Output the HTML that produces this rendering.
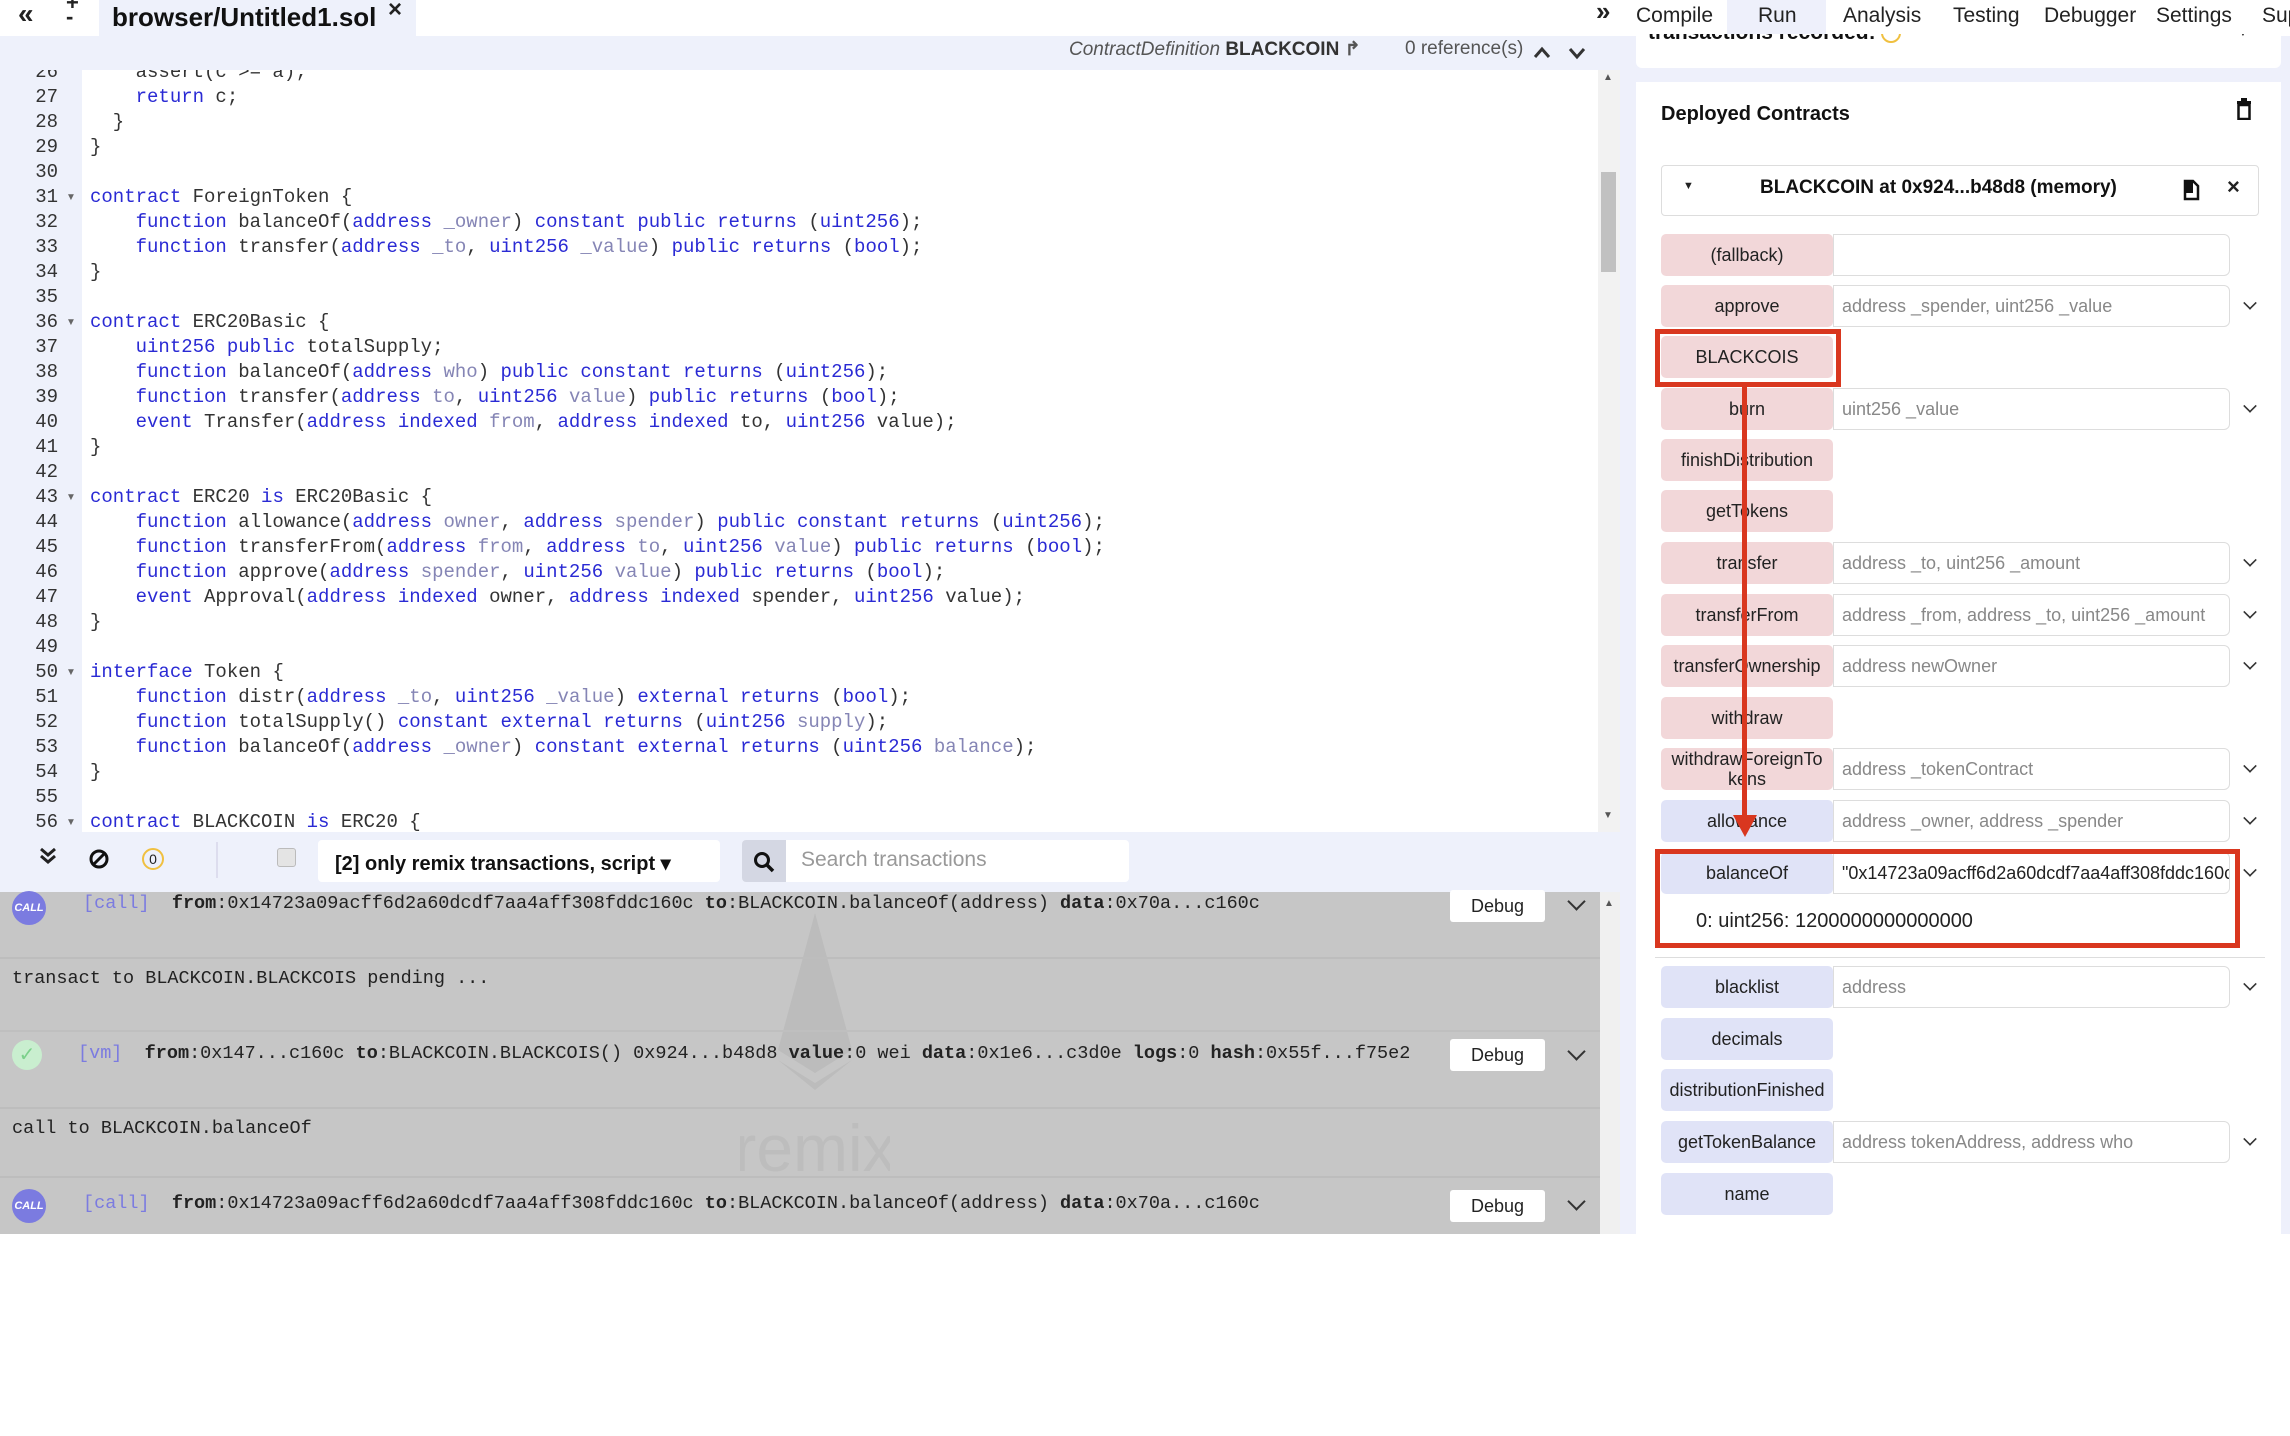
<!DOCTYPE html>
<html><head><meta charset="utf-8"><style>
*{margin:0;padding:0;box-sizing:border-box}
body{width:2290px;height:1436px;background:#fff;position:relative;overflow:hidden;font-family:"Liberation Sans",sans-serif;color:#222}
.a{position:absolute;white-space:pre}
.code{font-family:"Liberation Mono",monospace;font-size:19px;color:#333}
.k{color:#2a2ad4}.p{color:#8585b5}
.ln{position:absolute;left:0;width:58px;text-align:right;font-family:"Liberation Mono",monospace;font-size:19px;color:#333}
.fold{position:absolute;left:66px;font-size:10px;color:#666}
.row{position:absolute;left:1661px;height:42px}
.btn{position:absolute;left:0;top:0;width:172px;height:42px;border-radius:5px;font-size:18px;text-align:center;line-height:42px;color:#222}
.pk{background:#f2d7d9}.bl{background:#e0e3f7}
.inp{position:absolute;left:172px;top:0;width:397px;height:42px;background:#fff;border:1px solid #ddd;border-radius:0 6px 6px 0;font-size:18px;color:#888;line-height:40px;padding-left:8px;white-space:nowrap;overflow:hidden}
.chev{position:absolute;left:583px;top:12px;width:12px;height:12px;border-right:2px solid #333;border-bottom:2px solid #333;transform:rotate(45deg) scale(.8)}
.log{font-family:"Liberation Mono",monospace;font-size:18.5px;color:#222}
.dbg{position:absolute;left:1450px;width:95px;height:32px;background:#fff;border-radius:3px;font-size:18px;text-align:center;line-height:32px;color:#222}
.tch{position:absolute;left:1570px;width:13px;height:13px;border-right:2px solid #333;border-bottom:2px solid #333;transform:rotate(45deg)}
.sep{position:absolute;left:0;width:1600px;height:2px;background:#bdbdbd}
</style></head><body>

<!-- top tab bar -->
<div class="a" style="left:18px;top:-2px;font-size:28px;font-weight:bold">«</div>
<div class="a" style="left:66px;top:-4px;font-size:22px;font-weight:bold;line-height:14px">+<br>-</div>
<div class="a" style="left:99px;top:0;width:317px;height:36px;background:#eef1fb"></div>
<div class="a" style="left:112px;top:2px;font-size:26px;font-weight:bold;color:#111">browser/Untitled1.sol</div>
<div class="a" style="left:388px;top:-4px;font-size:24px;font-weight:bold">×</div>

<!-- editor header -->
<div class="a" style="left:0;top:36px;width:1620px;height:34px;background:#eef1fb"></div>
<div class="a" style="left:1069px;top:38px;font-size:19px;color:#555"><i>ContractDefinition</i> <b style="color:#333">BLACKCOIN</b> <span style="font-weight:bold">↱</span></div>
<div class="a" style="left:1405px;top:38px;font-size:19px;color:#555">0 reference(s)</div>
<svg class="a" style="left:1532px;top:42px" width="60" height="20"><path d="M3 15 L10 7 L17 15 M38 7 L45 15 L52 7" stroke="#333" stroke-width="3" fill="none"/></svg>

<!-- editor gutter -->
<div class="a" style="left:0;top:70px;width:82px;height:762px;background:#eef1fb"></div>
<div class="a" style="left:1598px;top:70px;width:22px;height:762px;background:#f2f2f2"></div>
<div class="a" style="left:1601px;top:172px;width:15px;height:100px;background:#c1c1c1"></div>
<div class="a" style="left:1603px;top:72px;font-size:10px;color:#555">▲</div>
<div class="a" style="left:1603px;top:810px;font-size:10px;color:#555">▼</div>

<div style="position:absolute;left:0;top:70px;width:1596px;height:762px;overflow:hidden"><div style="position:absolute;left:0;top:-70px;width:1596px;height:900px">
<div class="ln" style="top:61px">26</div><div class="a code" style="left:90px;top:61px">    assert(c &gt;= a);</div>
<div class="ln" style="top:86px">27</div><div class="a code" style="left:90px;top:86px">    <span class="k">return</span> c;</div>
<div class="ln" style="top:111px">28</div><div class="a code" style="left:90px;top:111px">  }</div>
<div class="ln" style="top:136px">29</div><div class="a code" style="left:90px;top:136px">}</div>
<div class="ln" style="top:161px">30</div>
<div class="ln" style="top:186px">31</div><div class="fold" style="top:192px">▼</div><div class="a code" style="left:90px;top:186px"><span class="k">contract</span> ForeignToken {</div>
<div class="ln" style="top:211px">32</div><div class="a code" style="left:90px;top:211px">    <span class="k">function</span> balanceOf(<span class="k">address</span> <span class="p">_owner</span>) <span class="k">constant public returns</span> (<span class="k">uint256</span>);</div>
<div class="ln" style="top:236px">33</div><div class="a code" style="left:90px;top:236px">    <span class="k">function</span> transfer(<span class="k">address</span> <span class="p">_to</span>, <span class="k">uint256</span> <span class="p">_value</span>) <span class="k">public returns</span> (<span class="k">bool</span>);</div>
<div class="ln" style="top:261px">34</div><div class="a code" style="left:90px;top:261px">}</div>
<div class="ln" style="top:286px">35</div>
<div class="ln" style="top:311px">36</div><div class="fold" style="top:317px">▼</div><div class="a code" style="left:90px;top:311px"><span class="k">contract</span> ERC20Basic {</div>
<div class="ln" style="top:336px">37</div><div class="a code" style="left:90px;top:336px">    <span class="k">uint256 public</span> totalSupply;</div>
<div class="ln" style="top:361px">38</div><div class="a code" style="left:90px;top:361px">    <span class="k">function</span> balanceOf(<span class="k">address</span> <span class="p">who</span>) <span class="k">public constant returns</span> (<span class="k">uint256</span>);</div>
<div class="ln" style="top:386px">39</div><div class="a code" style="left:90px;top:386px">    <span class="k">function</span> transfer(<span class="k">address</span> <span class="p">to</span>, <span class="k">uint256</span> <span class="p">value</span>) <span class="k">public returns</span> (<span class="k">bool</span>);</div>
<div class="ln" style="top:411px">40</div><div class="a code" style="left:90px;top:411px">    <span class="k">event</span> Transfer(<span class="k">address indexed</span> <span class="p">from</span>, <span class="k">address indexed</span> to, <span class="k">uint256</span> value);</div>
<div class="ln" style="top:436px">41</div><div class="a code" style="left:90px;top:436px">}</div>
<div class="ln" style="top:461px">42</div>
<div class="ln" style="top:486px">43</div><div class="fold" style="top:492px">▼</div><div class="a code" style="left:90px;top:486px"><span class="k">contract</span> ERC20 <span class="k">is</span> ERC20Basic {</div>
<div class="ln" style="top:511px">44</div><div class="a code" style="left:90px;top:511px">    <span class="k">function</span> allowance(<span class="k">address</span> <span class="p">owner</span>, <span class="k">address</span> <span class="p">spender</span>) <span class="k">public constant returns</span> (<span class="k">uint256</span>);</div>
<div class="ln" style="top:536px">45</div><div class="a code" style="left:90px;top:536px">    <span class="k">function</span> transferFrom(<span class="k">address</span> <span class="p">from</span>, <span class="k">address</span> <span class="p">to</span>, <span class="k">uint256</span> <span class="p">value</span>) <span class="k">public returns</span> (<span class="k">bool</span>);</div>
<div class="ln" style="top:561px">46</div><div class="a code" style="left:90px;top:561px">    <span class="k">function</span> approve(<span class="k">address</span> <span class="p">spender</span>, <span class="k">uint256</span> <span class="p">value</span>) <span class="k">public returns</span> (<span class="k">bool</span>);</div>
<div class="ln" style="top:586px">47</div><div class="a code" style="left:90px;top:586px">    <span class="k">event</span> Approval(<span class="k">address indexed</span> owner, <span class="k">address indexed</span> spender, <span class="k">uint256</span> value);</div>
<div class="ln" style="top:611px">48</div><div class="a code" style="left:90px;top:611px">}</div>
<div class="ln" style="top:636px">49</div>
<div class="ln" style="top:661px">50</div><div class="fold" style="top:667px">▼</div><div class="a code" style="left:90px;top:661px"><span class="k">interface</span> Token {</div>
<div class="ln" style="top:686px">51</div><div class="a code" style="left:90px;top:686px">    <span class="k">function</span> distr(<span class="k">address</span> <span class="p">_to</span>, <span class="k">uint256</span> <span class="p">_value</span>) <span class="k">external returns</span> (<span class="k">bool</span>);</div>
<div class="ln" style="top:711px">52</div><div class="a code" style="left:90px;top:711px">    <span class="k">function</span> totalSupply() <span class="k">constant external returns</span> (<span class="k">uint256</span> <span class="p">supply</span>);</div>
<div class="ln" style="top:736px">53</div><div class="a code" style="left:90px;top:736px">    <span class="k">function</span> balanceOf(<span class="k">address</span> <span class="p">_owner</span>) <span class="k">constant external returns</span> (<span class="k">uint256</span> <span class="p">balance</span>);</div>
<div class="ln" style="top:761px">54</div><div class="a code" style="left:90px;top:761px">}</div>
<div class="ln" style="top:786px">55</div>
<div class="ln" style="top:811px">56</div><div class="fold" style="top:817px">▼</div><div class="a code" style="left:90px;top:811px"><span class="k">contract</span> BLACKCOIN <span class="k">is</span> ERC20 {</div>
</div></div>
<div class="a" style="left:0;top:70px;width:82px;height:0"></div>

<!-- terminal toolbar -->
<div class="a" style="left:0;top:832px;width:1620px;height:60px;background:#eef1fb"></div>
<svg class="a" style="left:38px;top:846px" width="20" height="20"><path d="M3 3 L10 9 L17 3 M3 10 L10 16 L17 10" stroke="#222" stroke-width="3" fill="none"/></svg>
<svg class="a" style="left:88px;top:848px" width="22" height="22"><circle cx="11" cy="11" r="8" stroke="#111" stroke-width="3" fill="none"/><path d="M5 17 L17 5" stroke="#111" stroke-width="3"/></svg>
<div class="a" style="left:142px;top:848px;width:22px;height:22px;border:2px solid #f0c040;border-radius:50%;font-size:14px;text-align:center;line-height:18px">0</div>
<div class="a" style="left:216px;top:842px;width:2px;height:36px;background:#dde"></div>
<div class="a" style="left:277px;top:848px;width:19px;height:19px;border:1px solid #bbb;border-radius:3px;background:#e4e4e4"></div>
<div class="a" style="left:318px;top:840px;width:402px;height:42px;background:#fff;border-radius:4px"></div>
<div class="a" style="left:335px;top:851px;font-size:20px;font-weight:bold;color:#111">[2] only remix transactions, script ▾</div>
<div class="a" style="left:742px;top:840px;width:387px;height:42px;background:#fff;border-radius:4px"></div>
<div class="a" style="left:742px;top:840px;width:44px;height:42px;background:#d4d7e3;border-radius:4px 0 0 4px"></div>
<svg class="a" style="left:752px;top:850px" width="24" height="24"><circle cx="10" cy="10" r="6.5" stroke="#111" stroke-width="3" fill="none"/><path d="M15 15 L21 21" stroke="#111" stroke-width="3.5"/></svg>
<div class="a" style="left:801px;top:848px;font-size:21px;color:#999">Search transactions</div>

<!-- terminal log -->
<div class="a" style="left:0;top:892px;width:1600px;height:342px;background:#c6c6c6"></div>
<div class="a" style="left:1600px;top:892px;width:20px;height:342px;background:#f0f0f0"></div>
<div class="a" style="left:1604px;top:898px;font-size:10px;color:#555">▲</div>
<svg class="a" style="left:740px;top:905px" width="150" height="280"><g fill="#bcbcbc"><path d="M75 8 L38 145 L75 168 L112 145 Z"/><path d="M75 178 L38 155 L75 185 L112 155 Z"/></g><text x="75" y="266" font-family="Liberation Sans" font-size="66" fill="#bdbdbd" text-anchor="middle">remix</text></svg>

<div class="sep" style="top:957px"></div>
<div class="sep" style="top:1107px"></div>
<div class="sep" style="top:1176px"></div>
<div class="sep" style="top:1030px;background:#bfbfbf"></div>

<div class="a" style="left:12px;top:891px;width:34px;height:34px;border-radius:50%;background:#7b7be0;color:#fff;font-size:11px;font-weight:bold;font-style:italic;text-align:center;line-height:34px">CALL</div>
<div class="a log" style="left:83px;top:893px"><span style="color:#7b7be0">[call]</span>  <b>from</b>:0x14723a09acff6d2a60dcdf7aa4aff308fddc160c <b>to</b>:BLACKCOIN.balanceOf(address) <b>data</b>:0x70a...c160c</div>
<div class="dbg" style="top:890px">Debug</div><div class="tch" style="top:895px"></div>

<div class="a log" style="left:12px;top:968px">transact to BLACKCOIN.BLACKCOIS pending ...</div>

<div class="a" style="left:12px;top:1040px;width:30px;height:30px;border-radius:50%;background:#c9eecf;color:#7bd08a;font-size:20px;text-align:center;line-height:30px">✓</div>
<div class="a log" style="left:78px;top:1043px"><span style="color:#7b7be0">[vm]</span>  <b>from</b>:0x147...c160c <b>to</b>:BLACKCOIN.BLACKCOIS() 0x924...b48d8 <b>value</b>:0 wei <b>data</b>:0x1e6...c3d0e <b>logs</b>:0 <b>hash</b>:0x55f...f75e2</div>
<div class="dbg" style="top:1039px">Debug</div><div class="tch" style="top:1045px"></div>

<div class="a log" style="left:12px;top:1118px">call to BLACKCOIN.balanceOf</div>

<div class="a" style="left:12px;top:1189px;width:34px;height:34px;border-radius:50%;background:#7b7be0;color:#fff;font-size:11px;font-weight:bold;font-style:italic;text-align:center;line-height:34px">CALL</div>
<div class="a log" style="left:83px;top:1193px"><span style="color:#7b7be0">[call]</span>  <b>from</b>:0x14723a09acff6d2a60dcdf7aa4aff308fddc160c <b>to</b>:BLACKCOIN.balanceOf(address) <b>data</b>:0x70a...c160c</div>
<div class="dbg" style="top:1190px">Debug</div><div class="tch" style="top:1195px"></div>

<!-- right panel -->
<div class="a" style="left:1620px;top:36px;width:670px;height:1198px;background:#eef0fb"></div>
<div class="a" style="left:1636px;top:20px;width:645px;height:48px;background:#fff;border-radius:0 0 6px 6px;overflow:hidden"><div class="a" style="left:12px;top:1px;font-size:21px;font-weight:bold;color:#111">transactions recorded: <span style="display:inline-block;width:20px;height:20px;border:2px solid #f0c040;border-radius:50%;font-size:12px;vertical-align:middle"></span></div><div class="a" style="left:602px;top:8px;font-size:10px">▼</div></div>
<div class="a" style="left:1620px;top:0;width:670px;height:34px;background:#fff"></div>
<div class="a" style="left:1727px;top:0;width:99px;height:34px;background:#eef0fb"></div>
<div class="a" style="left:1596px;top:-4px;font-size:26px;font-weight:bold">»</div>
<div class="a" style="left:1636px;top:4px;font-size:21px;color:#222">Compile</div>
<div class="a" style="left:1758px;top:4px;font-size:21px;color:#222">Run</div>
<div class="a" style="left:1843px;top:4px;font-size:21px;color:#222">Analysis</div>
<div class="a" style="left:1953px;top:4px;font-size:21px;color:#222">Testing</div>
<div class="a" style="left:2044px;top:4px;font-size:21px;color:#222">Debugger</div>
<div class="a" style="left:2156px;top:4px;font-size:21px;color:#222">Settings</div>
<div class="a" style="left:2262px;top:4px;font-size:21px;color:#222">Sup</div>

<div class="a" style="left:1636px;top:82px;width:645px;height:1152px;background:#fff"></div>
<div class="a" style="left:1661px;top:103px;font-size:20px;font-weight:bold;color:#111">Deployed Contracts</div>
<svg class="a" style="left:2236px;top:98px" width="16" height="22"><rect x="1" y="3" width="14" height="3" fill="#111"/><rect x="5" y="0" width="6" height="3" fill="#111"/><rect x="2.5" y="7" width="11" height="14" fill="none" stroke="#111" stroke-width="2.5"/></svg>
<div class="a" style="left:1661px;top:165px;width:598px;height:51px;border:1px solid #ddd;border-radius:4px;background:#fff"></div>
<div class="a" style="left:1683px;top:180px;font-size:11px">▼</div>
<div class="a" style="left:1760px;top:177px;font-size:19px;font-weight:bold;color:#111">BLACKCOIN at 0x924...b48d8 (memory)</div>
<svg class="a" style="left:2182px;top:178px" width="20" height="24"><path d="M3 3 H11 L16 8 V21 H3 Z" fill="#fff" stroke="#111" stroke-width="2.5"/><rect x="3" y="3" width="8" height="12" fill="#111"/></svg>
<div class="a" style="left:2227px;top:174px;font-size:22px;font-weight:bold">×</div>

<div class="row" style="top:234px"><div class="btn pk">(fallback)</div><div class="inp"></div></div>
<div class="row" style="top:285px"><div class="btn pk">approve</div><div class="inp">address _spender, uint256 _value</div><div class="chev"></div></div>
<div class="row" style="top:336px"><div class="btn pk">BLACKCOIS</div></div>
<div class="row" style="top:388px"><div class="btn pk">burn</div><div class="inp">uint256 _value</div><div class="chev"></div></div>
<div class="row" style="top:439px"><div class="btn pk">finishDistribution</div></div>
<div class="row" style="top:490px"><div class="btn pk">getTokens</div></div>
<div class="row" style="top:542px"><div class="btn pk">transfer</div><div class="inp">address _to, uint256 _amount</div><div class="chev"></div></div>
<div class="row" style="top:594px"><div class="btn pk">transferFrom</div><div class="inp">address _from, address _to, uint256 _amount</div><div class="chev"></div></div>
<div class="row" style="top:645px"><div class="btn pk">transferOwnership</div><div class="inp">address newOwner</div><div class="chev"></div></div>
<div class="row" style="top:697px"><div class="btn pk">withdraw</div></div>
<div class="row" style="top:748px"><div class="btn pk" style="line-height:20px;padding-top:1px">withdrawForeignTo<br>kens</div><div class="inp">address _tokenContract</div><div class="chev"></div></div>
<div class="row" style="top:800px"><div class="btn bl">allowance</div><div class="inp">address _owner, address _spender</div><div class="chev"></div></div>
<div class="row" style="top:852px"><div class="btn bl">balanceOf</div><div class="inp" style="color:#222">"0x14723a09acff6d2a60dcdf7aa4aff308fddc160c"</div><div class="chev"></div></div>
<div class="a" style="left:1696px;top:910px;font-size:20px;color:#222">0: uint256: 1200000000000000</div>
<div class="a" style="left:1655px;top:957px;width:610px;height:1px;background:#ddd"></div>
<div class="row" style="top:966px"><div class="btn bl">blacklist</div><div class="inp">address</div><div class="chev"></div></div>
<div class="row" style="top:1018px"><div class="btn bl">decimals</div></div>
<div class="row" style="top:1069px"><div class="btn bl">distributionFinished</div></div>
<div class="row" style="top:1121px"><div class="btn bl">getTokenBalance</div><div class="inp">address tokenAddress, address who</div><div class="chev"></div></div>
<div class="row" style="top:1173px"><div class="btn bl">name</div></div>
<div class="row" style="top:1224px;height:10px;overflow:hidden"><div class="btn bl"></div></div>

<!-- red annotations -->
<div class="a" style="left:1655px;top:329px;width:186px;height:58px;border:5px solid #d9371f"></div>
<div class="a" style="left:1655px;top:849px;width:585px;height:99px;border:5px solid #d9371f"></div>
<div class="a" style="left:1742px;top:386px;width:5px;height:434px;background:#d9371f"></div>
<svg class="a" style="left:1733px;top:815px" width="24" height="22"><path d="M0 0 L24 0 L12 22 Z" fill="#d9371f"/></svg>
</body></html>
